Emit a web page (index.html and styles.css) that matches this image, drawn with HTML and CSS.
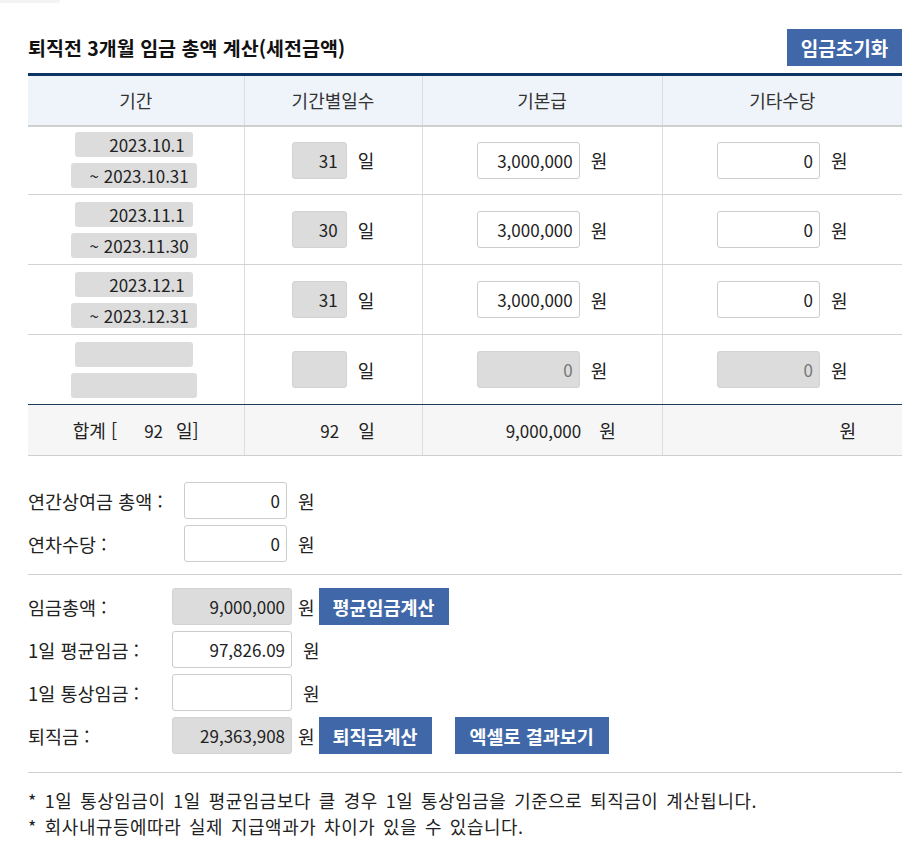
FILE: index.html
```html
<!DOCTYPE html>
<html lang="ko">
<head>
<meta charset="utf-8">
<title>퇴직금 계산</title>
<link rel="stylesheet" href="styles.css">
</head>
<body>
<div class="corner"></div>
<div class="page">
  <div class="title-row">
    <h2 class="title">퇴직전 3개월 임금 총액 계산(세전금액)</h2>
    <button class="btn btn-reset">임금초기화</button>
  </div>

  <table class="grid">
    <colgroup>
      <col class="c1"><col class="c2"><col class="c3"><col class="c4">
    </colgroup>
    <thead>
      <tr><th>기간</th><th>기간별일수</th><th>기본급</th><th>기타수당</th></tr>
    </thead>
    <tbody>
      <tr>
        <td><div class="dates"><span class="dbox d1">2023.10.1</span><span class="dbox d2">~ 2023.10.31</span></div></td>
        <td><div class="cell"><input class="inp gray days" value="31" readonly><span class="unit">일</span></div></td>
        <td><div class="cell"><input class="inp money" value="3,000,000"><span class="unit">원</span></div></td>
        <td><div class="cell"><input class="inp money" value="0"><span class="unit">원</span></div></td>
      </tr>
      <tr>
        <td><div class="dates"><span class="dbox d1">2023.11.1</span><span class="dbox d2">~ 2023.11.30</span></div></td>
        <td><div class="cell"><input class="inp gray days" value="30" readonly><span class="unit">일</span></div></td>
        <td><div class="cell"><input class="inp money" value="3,000,000"><span class="unit">원</span></div></td>
        <td><div class="cell"><input class="inp money" value="0"><span class="unit">원</span></div></td>
      </tr>
      <tr>
        <td><div class="dates"><span class="dbox d1">2023.12.1</span><span class="dbox d2">~ 2023.12.31</span></div></td>
        <td><div class="cell"><input class="inp gray days" value="31" readonly><span class="unit">일</span></div></td>
        <td><div class="cell"><input class="inp money" value="3,000,000"><span class="unit">원</span></div></td>
        <td><div class="cell"><input class="inp money" value="0"><span class="unit">원</span></div></td>
      </tr>
      <tr>
        <td><div class="dates"><span class="dbox d1"></span><span class="dbox d2"></span></div></td>
        <td><div class="cell"><input class="inp gray days" value="" readonly><span class="unit">일</span></div></td>
        <td><div class="cell"><input class="inp gray money dim" value="0" readonly><span class="unit">원</span></div></td>
        <td><div class="cell"><input class="inp gray money dim" value="0" readonly><span class="unit">원</span></div></td>
      </tr>
    </tbody>
    <tfoot>
      <tr>
        <td><div class="cell"><span class="kr">합계 [</span><span class="tsum num">92</span><span class="kr">일]</span></div></td>
        <td><div class="cell"><span class="tnum tnum-d num">92</span><span class="kr">일</span></div></td>
        <td><div class="cell"><span class="tnum tnum-m num">9,000,000</span><span class="kr">원</span></div></td>
        <td><div class="cell"><span class="tnum tnum-m num"></span><span class="kr">원</span></div></td>
      </tr>
    </tfoot>
  </table>

  <div class="form form-a">
    <div class="frow">
      <span class="lbl lbl-a">연간상여금 총액 :</span>
      <input class="inp fa" value="0">
      <span class="unit">원</span>
    </div>
    <div class="frow">
      <span class="lbl lbl-a">연차수당 :</span>
      <input class="inp fa" value="0">
      <span class="unit">원</span>
    </div>
  </div>

  <div class="sep"></div>

  <div class="form form-b">
    <div class="frow">
      <span class="lbl lbl-b">임금총액 :</span>
      <input class="inp gray fb" value="9,000,000" readonly>
      <span class="unit near">원</span>
      <button class="btn btn-sm w-avg">평균임금계산</button>
    </div>
    <div class="frow">
      <span class="lbl lbl-b">1일 평균임금 :</span>
      <input class="inp fb" value="97,826.09">
      <span class="unit">원</span>
    </div>
    <div class="frow">
      <span class="lbl lbl-b">1일 통상임금 :</span>
      <input class="inp fb" value="">
      <span class="unit">원</span>
    </div>
    <div class="frow">
      <span class="lbl lbl-b">퇴직금 :</span>
      <input class="inp gray fb" value="29,363,908" readonly>
      <span class="unit near">원</span>
      <button class="btn btn-sm w-sev">퇴직금계산</button>
      <button class="btn btn-sm w-xls">엑셀로 결과보기</button>
    </div>
  </div>

  <div class="sep sep-b"></div>

  <div class="notes">
    <p>* 1일 통상임금이 1일 평균임금보다 클 경우 1일 통상임금을 기준으로 퇴직금이 계산됩니다.</p>
    <p>* 회사내규등에따라 실제 지급액과가 차이가 있을 수 있습니다.</p>
  </div>
</div>
</body>
</html>
```
FILE: styles.css
```css
* { box-sizing: border-box; }
html, body { margin: 0; padding: 0; background: #fff; }
body {
  font-family: "Noto Sans CJK KR", "Noto Sans", sans-serif;
  font-size: 18.5px;
  color: #222;
}
.corner {
  position: absolute;
  left: 0; top: 0;
  width: 60px; height: 3px;
  background: #f3f3f3;
  border-bottom-right-radius: 6px;
}
.page {
  width: 902px;
  padding: 29px 0 0 28px;
}
.title-row {
  display: flex;
  justify-content: space-between;
  align-items: center;
  height: 37px;
}
.title {
  margin: 0;
  font-size: 19.5px;
  font-weight: bold;
  color: #111;
}
.btn {
  border: 0;
  margin: 0;
  padding: 0;
  background: #4068a8;
  color: #fff;
  font-family: inherit;
  font-weight: bold;
  font-size: 19px;
  cursor: pointer;
  text-align: center;
}
.btn-reset { width: 115px; height: 37px; }

.grid {
  margin-top: 7px;
  width: 874px;
  border-collapse: collapse;
  table-layout: fixed;
  border-top: 3px solid #0c3462;
}
.c1 { width: 216px; }
.c2 { width: 178px; }
.c3 { width: 240px; }
.c4 { width: 240px; }
.grid th {
  height: 51px;
  background: #eff3fa;
  font-weight: normal;
  font-size: 18px;
  color: #333;
  border-bottom: 2px solid #cfcfcf;
  border-left: 1px solid #ddd;
  padding: 0;
}
.grid td {
  height: 70px;
  padding: 0;
  border-bottom: 1px solid #d3d3d3;
  border-left: 1px solid #ddd;
  text-align: center;
}
.grid th:first-child, .grid td:first-child { border-left: 0; }
.grid tbody tr:first-child td { height: 69px; }
.grid tbody tr:last-child td { border-bottom: 1px solid #1e3a5a; }
.grid tfoot td {
  height: 51px;
  background: #f6f6f6;
  border-bottom: 1px solid #cfcfcf;
}
.cell {
  display: flex;
  justify-content: center;
  align-items: center;
}
.dates {
  display: flex;
  flex-direction: column;
  align-items: center;
  gap: 6px;
  padding-right: 4px;
}
.dbox {
  display: block;
  height: 25px;
  line-height: 25px;
  background: #dcdcdc;
  border-radius: 3px;
  text-align: right;
  padding-right: 8px;
  font-size: 17px;
  color: #222;
}
.d1 { width: 118px; }
.d2 { width: 126px; }

.inp {
  height: 37px;
  border: 1px solid #cccccc;
  border-radius: 3px;
  background: #fff;
  text-align: right;
  padding: 0 6px;
  font-family: inherit;
  font-size: 17px;
  color: #222;
  margin: 0;
  outline: none;
}
.inp.gray { background: #dcdcdc; border-color: #d2d2d2; }
.inp.dim { color: #777; }
.days { width: 55px; padding-right: 8px; }
.money { width: 103px; }
.unit { margin-left: 11px; font-size: 18px; }
.unit.near { margin-left: 6px; }

.num { font-size: 17px; }
.kr { font-size: 18px; }
.tsum { display: inline-block; width: 46px; text-align: right; margin-right: 13px; }
.tnum { display: inline-block; text-align: right; }
.tnum-d { width: 48px; margin-right: 19px; }
.tnum-m { width: 113px; margin-right: 18px; }

.form { display: flex; flex-direction: column; gap: 6px; }
.form-a { margin-top: 26px; }
.frow { display: flex; align-items: center; height: 37px; }
.lbl { flex: none; font-size: 18.5px; }
.lbl-a { width: 156px; }
.lbl-b { width: 144px; }
.fa { width: 103px; }
.fb { width: 120px; }
.btn-sm { height: 37px; margin-left: 4px; font-size: 18.5px; }
.w-avg { width: 130px; }
.w-sev { width: 113px; }
.w-xls { width: 154px; margin-left: 23px; }

.sep {
  width: 874px;
  height: 1px;
  background: #cfcfcf;
  margin: 12px 0 13px;
}
.sep-b { margin: 18px 0 0; }
.notes {
  margin-top: 14px;
  font-size: 17.9px;
  line-height: 26px;
  letter-spacing: 0.6px;
  word-spacing: 2.2px;
}
.notes p { margin: 0; }
```
